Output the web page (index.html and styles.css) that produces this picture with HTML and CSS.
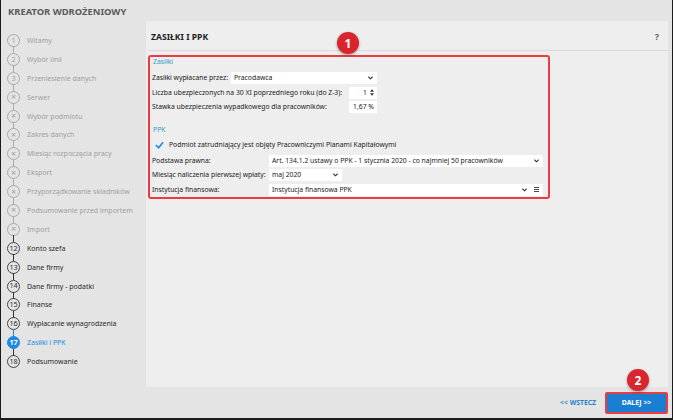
FILE: index.html
```html
<!DOCTYPE html>
<html lang="pl">
<head>
    <meta charset="UTF-8">
    <title>Kreator wdrożeniowy</title>
    <link rel="stylesheet" href="styles.css">
</head>
<body>

<div class="window">
    <div class="wtitle">KREATOR WDROŻENIOWY</div>

    <div class="wbody">
        <ul class="steps">
            <li class="off"><span class="dot">1</span>Witamy</li>
            <li class="off"><span class="dot">2</span>Wybór linii</li>
            <li class="off"><span class="dot">3</span>Przeniesienie danych</li>
            <li class="off"><span class="dot x">&times;</span>Serwer</li>
            <li class="off"><span class="dot x">&times;</span>Wybór podmiotu</li>
            <li class="off"><span class="dot x">&times;</span>Zakres danych</li>
            <li class="off"><span class="dot x">&times;</span>Miesiąc rozpoczęcia pracy</li>
            <li class="off"><span class="dot x">&times;</span>Eksport</li>
            <li class="off"><span class="dot x">&times;</span>Przyporządkowanie składników</li>
            <li class="off"><span class="dot x">&times;</span>Podsumowanie przed importem</li>
            <li class="off"><span class="dot x">&times;</span>Import</li>
            <li><span class="dot">12</span>Konto szefa</li>
            <li><span class="dot">13</span>Dane firmy</li>
            <li><span class="dot">14</span>Dane firmy - podatki</li>
            <li><span class="dot">15</span>Finanse</li>
            <li><span class="dot">16</span>Wypłacanie wynagrodzenia</li>
            <li class="active"><span class="dot">17</span>Zasiłki i PPK</li>
            <li><span class="dot">18</span>Podsumowanie</li>
        </ul>

        <div class="panel">
            <div class="phead">
                <span class="ptitle">ZASIŁKI I PPK</span>
                <span class="help">?</span>
            </div>

            <div class="hl">
                <div class="sec">Zasiłki</div>
                <div class="row r1">
                    <span class="lbl w79">Zasiłki wypłacane przez:</span>
                    <span class="field w146">Pracodawca<svg class="chev" viewBox="0 0 6 4"><polyline points="0.5,0.5 3,3 5.5,0.5"/></svg></span>
                </div>
                <div class="row r2">
                    <span class="lbl w197">Liczba ubezpieczonych na 30 XI poprzedniego roku (do Z-3):</span>
                    <span class="field right w28">1<svg class="spin" viewBox="0 0 5 8"><polygon points="2.5,0 5,3 0,3"/><polygon points="0,5 5,5 2.5,8"/></svg></span>
                </div>
                <div class="row r3">
                    <span class="lbl w197">Stawka ubezpieczenia wypadkowego dla pracowników:</span>
                    <span class="field right w28">1,67 %</span>
                </div>

                <div class="sec ppk">PPK</div>
                <div class="row chk">
                    <svg class="tick" viewBox="0 0 10 8"><polyline points="1,4 4,7 9,1"/></svg>
                    <span>Podmiot zatrudniający jest objęty Pracowniczymi Planami Kapitałowymi</span>
                </div>
                <div class="row r5">
                    <span class="lbl w117">Podstawa prawna:</span>
                    <span class="field w274">Art. 134.1.2 ustawy o PPK - 1 stycznia 2020 - co najmniej 50 pracowników<svg class="chev" viewBox="0 0 6 4"><polyline points="0.5,0.5 3,3 5.5,0.5"/></svg></span>
                </div>
                <div class="row r6">
                    <span class="lbl w117">Miesiąc naliczenia pierwszej wpłaty:</span>
                    <span class="field w73">maj 2020<svg class="chev" viewBox="0 0 6 4"><polyline points="0.5,0.5 3,3 5.5,0.5"/></svg></span>
                </div>
                <div class="row r7">
                    <span class="lbl w117">Instytucja finansowa:</span>
                    <span class="field w274">Instytucja finansowa PPK<svg class="chev" viewBox="0 0 6 4"><polyline points="0.5,0.5 3,3 5.5,0.5"/></svg><svg class="menu" viewBox="0 0 5 5"><path d="M0 0.5H5M0 2.5H5M0 4.5H5"/></svg></span>
                </div>
            </div>

            <span class="badge b1">1</span>
        </div>
    </div>

    <div class="wfoot">
        <a href="#" class="back">&lt;&lt; WSTECZ</a>
        <div class="hlbtn"><button class="next">DALEJ &gt;&gt;</button></div>
        <span class="badge b2">2</span>
    </div>
</div>

</body>
</html>
```

FILE: styles.css
```css
* {
    box-sizing: border-box;
}
body {
    margin: 0;
    font-family: "Noto Sans", "Open Sans", sans-serif;
    background: #e4e4e4;
}
.window {
    width: 673px;
    height: 420px;
    background: #e4e4e4;
    border-left: 1px solid #1c1c1c;
    border-right: 1px solid #1c1c1c;
    border-bottom: 2px solid #1c1c1c;
    display: flex;
    flex-direction: column;
}
.wtitle {
    height: 21px;
    padding: 5px 0 0 7px;
    font-size: 9.4px;
    font-weight: bold;
    color: #5a5a5a;
    line-height: 13px;
}
.wbody {
    height: 366px;
    display: flex;
}

/* steps */
.steps {
    list-style: none;
    margin: 0;
    padding: 10px 0 0 6px;
    width: 145px;
}
.steps li {
    position: relative;
    height: 18.9px;
    display: flex;
    align-items: center;
    font-size: 7px;
    color: #2a2a2a;
}
.steps li.off {
    color: #a0a0a0;
}
.steps li.active {
    color: #1e88e5;
}
.steps li + li::before {
    content: "";
    position: absolute;
    left: 6px;
    top: -3.5px;
    width: 1px;
    height: 7px;
    background: #333;
}
.steps li.off + li.off::before {
    background: #aaa;
}
.steps li.active::before {
    background: #1e88e5;
}
.dot {
    width: 13px;
    height: 13px;
    border: 1px solid #444;
    border-radius: 50%;
    margin-right: 7px;
    display: flex;
    align-items: center;
    justify-content: center;
    font-size: 7.2px;
    line-height: 1;
    flex-shrink: 0;
    background: #e4e4e4;
}
.dot.x {
    font-size: 9px;
    padding-bottom: 1px;
}
.off .dot {
    border-color: #aaa;
}
.active .dot {
    background: #1e88e5;
    border-color: #1e88e5;
    color: #fff;
    font-weight: bold;
}

/* panel */
.panel {
    position: relative;
    flex: 1;
    margin-right: 4px;
    background: #eeeeee;
    padding: 0 0 0 2px;
}
.phead {
    height: 30px;
    display: flex;
    align-items: center;
    justify-content: space-between;
    border-bottom: 1px solid #dadada;
    padding: 0 9px 0 3px;
}
.ptitle {
    font-size: 8.6px;
    font-weight: bold;
    color: #1e1e1e;
    padding-top: 2px;
}
.help {
    font-size: 9px;
    font-weight: bold;
    color: #666;
    padding-top: 2px;
}
.hl {
    margin-top: 4px;
    width: 402px;
    height: 144px;
    border: 2px solid #ec3b42;
    border-radius: 3px;
    padding: 0 0 0 2px;
    display: flex;
    flex-direction: column;
    font-size: 6.8px;
    color: #1a1a1a;
}
.sec {
    height: 10px;
    line-height: 10px;
    color: #3a9bc9;
    font-size: 6.9px;
    padding-left: 1px;
}
.sec.ppk {
    margin-top: 12px;
}
.row {
    display: flex;
    align-items: center;
    height: 13px;
}
.r1 { margin-top: 4px; }
.r2 { margin-top: 2px; }
.r3 { margin-top: 1px; }
.chk { margin-top: 3px; padding-left: 3px; }
.r5 { margin-top: 3px; }
.r6 { margin-top: 1px; }
.r7 { margin-top: 2px; }
.lbl {
    flex-shrink: 0;
    white-space: nowrap;
}
.w79 { width: 79px; }
.w197 { width: 197px; }
.w117 { width: 117px; }
.w146 { width: 146px; }
.w28 { width: 28px; }
.w73 { width: 73px; }
.w274 { width: 274px; }
.field {
    height: 12px;
    background: #fff;
    display: flex;
    align-items: center;
    padding: 0 4px 0 3px;
    white-space: nowrap;
    flex-shrink: 0;
}
.field.right {
    justify-content: flex-end;
    padding-right: 3px;
}
.chev {
    width: 5px;
    height: 4px;
    margin-left: auto;
    fill: none;
    stroke: #333;
    stroke-width: 1.3;
}
.spin {
    width: 4px;
    height: 7px;
    margin-left: 3px;
    fill: #333;
}
.menu {
    width: 5px;
    height: 5px;
    margin-left: 7px;
    fill: none;
    stroke: #333;
    stroke-width: 0.9;
}
.tick {
    width: 9px;
    height: 8px;
    margin-right: 5px;
    fill: none;
    stroke: #1e88e5;
    stroke-width: 1.8;
}

/* badges */
.badge {
    position: absolute;
    width: 22px;
    height: 22px;
    border-radius: 50%;
    background: #d9262e;
    color: #fff;
    font-size: 12px;
    font-weight: bold;
    display: flex;
    align-items: center;
    justify-content: center;
    box-shadow: 0 1px 3px rgba(0, 0, 0, 0.35);
}
.b1 {
    left: 191px;
    top: 11px;
}
.b2 {
    right: 23px;
    top: -18px;
}

/* footer */
.wfoot {
    position: relative;
    flex: 1;
    display: flex;
    align-items: center;
    justify-content: flex-end;
    padding-right: 4px;
}
.back {
    font-size: 6.8px;
    font-weight: bold;
    color: #2b82c9;
    text-decoration: none;
    margin-right: 9px;
}
.hlbtn {
    border: 2px solid #ec3b42;
    border-radius: 2px;
    padding: 0;
}
.next {
    display: block;
    width: 59px;
    height: 18px;
    border: none;
    background: #1a7fd3;
    color: #fff;
    font-family: "Noto Sans", sans-serif;
    font-size: 6.8px;
    font-weight: bold;
    padding: 0;
}
```
